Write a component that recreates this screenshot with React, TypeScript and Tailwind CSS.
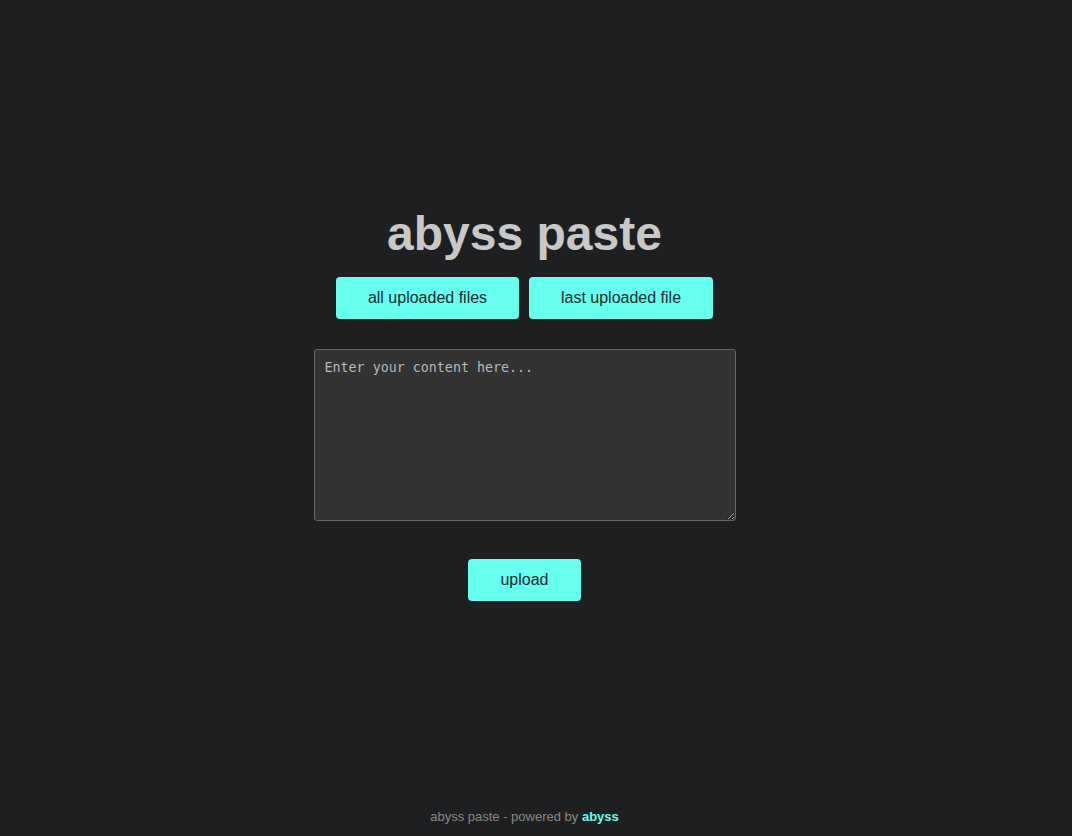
export default function App() {
  return (
    <div className="flex min-h-screen flex-col bg-[#1e1f21] pr-[23px] font-['Liberation_Sans',Arial,sans-serif]">
      <main className="flex flex-col items-center pt-[207px]">
        <h1 className="text-[48px] font-bold leading-[54px] text-[#c8c8c8]">
          abyss paste
        </h1>
        <div className="mt-4 flex gap-[10px]">
          <button className="h-[42px] w-[183px] rounded bg-[#66fff0] text-base text-[#1f2a30]">
            all uploaded files
          </button>
          <button className="h-[42px] w-[184px] rounded bg-[#66fff0] text-base text-[#1f2a30]">
            last uploaded file
          </button>
        </div>
        <textarea
          placeholder="Enter your content here..."
          className="mt-[30px] h-[172px] w-[422px] rounded-[3px] border border-[#666] bg-[#333] px-[10px] pt-[9px] pb-[8px] font-['DejaVu_Sans_Mono',monospace] text-[13.33px] leading-[18px] text-[#ddd] placeholder:text-[#b8b8b8] focus:outline-none"
        />
        <button className="mt-[38px] h-[42px] w-[113px] rounded bg-[#66fff0] text-base text-[#1f2a30]">
          upload
        </button>
      </main>
      <footer className="mt-auto pb-3 text-center text-[13px] leading-[15px] text-[#888]">
        abyss paste - powered by{" "}
        <span className="font-bold text-[#66fff0]">abyss</span>
      </footer>
    </div>
  );
}
